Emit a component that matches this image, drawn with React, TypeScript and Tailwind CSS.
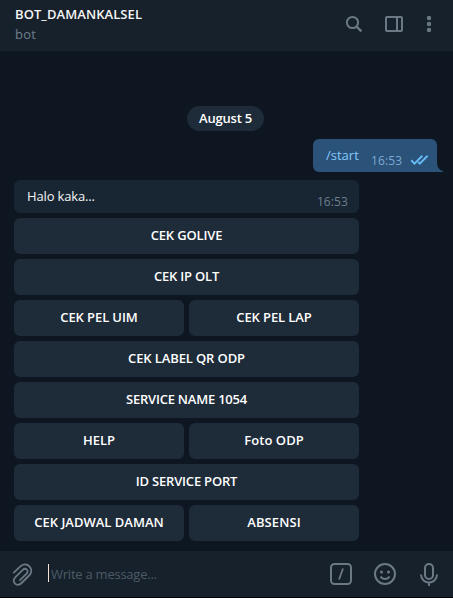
import React from "react";

type Key = { label: string; tracking?: string };

const keyboard: Key[][] = [
  [{ label: "CEK GOLIVE", tracking: "tracking-[-0.15px]" }],
  [{ label: "CEK IP OLT", tracking: "tracking-[-0.2px]" }],
  [
    { label: "CEK PEL UIM", tracking: "tracking-[-0.1px]" },
    { label: "CEK PEL LAP", tracking: "tracking-[-0.1px]" },
  ],
  [{ label: "CEK LABEL QR ODP", tracking: "tracking-[-0.12px]" }],
  [{ label: "SERVICE NAME 1054", tracking: "tracking-[-0.22px]" }],
  [{ label: "HELP" }, { label: "Foto ODP", tracking: "tracking-[0.08px]" }],
  [{ label: "ID SERVICE PORT", tracking: "tracking-[-0.2px]" }],
  [{ label: "CEK JADWAL DAMAN" }, { label: "ABSENSI", tracking: "tracking-[0.1px]" }],
];

function Header() {
  return (
    <header className="flex h-[51px] shrink-0 justify-between bg-[#17212b] pl-[15px]">
      <div className="pt-1">
        <h1 className="h-5 text-[13px] leading-5 font-semibold tracking-[0.07px] text-[#f5f5f5]">BOT_DAMANKALSEL</h1>
        <p className="h-5 text-[13px] leading-5 tracking-[0.2px] text-[#6d7f8f]">bot</p>
      </div>
      <svg className="h-[51px] w-[123px]" viewBox="330 0 123 51" fill="none" stroke="#6c7883" strokeWidth="2">
        <circle cx="352.5" cy="22.5" r="5.6" />
        <path d="M356.6 26.6L361.4 31.4" strokeWidth="2.4" />
        <rect x="386" y="17" width="16" height="14" rx="1" />
        <path d="M397 17V31" />
        <g fill="#6c7883" stroke="none">
          <circle cx="429" cy="18" r="2.2" />
          <circle cx="429" cy="24" r="2.2" />
          <circle cx="429" cy="30" r="2.2" />
        </g>
      </svg>
    </header>
  );
}

function Composer() {
  return (
    <footer className="flex h-[47px] shrink-0 border-b border-black bg-[#17212b]">
      <svg className="h-[46px] w-12" viewBox="0 551 48 46" fill="none" stroke="#6c7883" strokeWidth="1.8" strokeLinecap="round">
        <path d="M13.8 572.7L19.8 566.8C23.5 563.2 27.3 564.3 29.4 566.4C31.8 568.8 32.2 572.4 29.1 575.5L21.6 583C19.2 585.4 16.6 585.2 15 583.6C13.2 581.8 13.2 579.4 15.4 577.2L22.8 569.8C24.2 568.4 25.8 568.6 26.8 569.6C27.8 570.6 28 572.2 26.6 573.6L20 580.2" />
      </svg>
      <div className="mt-[13px] h-[18px] w-px bg-[#f5e4d5]" />
      <p className="mt-[13px] ml-[2px] flex-1 text-[13px] leading-5 tracking-[-0.24px] text-[#4c5a67]">Write a message...</p>
      <svg className="h-[46px] w-[143px]" viewBox="310 551 143 46" fill="none" stroke="#6c7883" strokeWidth="2">
        <rect x="331" y="564" width="20" height="20" rx="3.5" />
        <path d="M343 568.5L339 579.5" strokeWidth="1.8" />
        <circle cx="385" cy="574" r="10" />
        <circle cx="381.5" cy="572" r="1.5" fill="#6c7883" stroke="none" />
        <circle cx="388.5" cy="572" r="1.5" fill="#6c7883" stroke="none" />
        <path d="M380.5 576.5C382.5 579.8 387.5 579.8 389.5 576.5" strokeWidth="1.9" />
        <rect x="425" y="564" width="8" height="15" rx="4" />
        <path d="M421 574.5C421 585 437 585 437 574.5M429 582V586" />
      </svg>
    </footer>
  );
}

export default function App() {
  return (
    <div className="flex h-[598px] w-[453px] flex-col overflow-hidden bg-[#0e1621] font-['Open_Sans',sans-serif] text-[13px]">
      <Header />
      <main className="flex h-[500px] shrink-0 flex-col pt-[55px]">
        <div className="ml-[187px] flex h-[25px] w-[77px] items-center justify-center rounded-full bg-[#1e2c3a] font-semibold tracking-[-0.2px] text-white">
          August 5
        </div>
        <div className="relative mt-2 ml-[313px] flex h-[33px] w-[124px] rounded-[6px] rounded-br-none bg-[#2b5278] pl-[13px]">
          <span className="w-[45px] pt-[6px] leading-5 text-[#83caff]">/start</span>
          <span className="w-[39px] pt-[12px] text-[12px] leading-[19px] tracking-[0.1px] text-[#7da8d3]">16:53</span>
          <svg className="mt-[15px] h-3 w-[20px]" viewBox="0 0 20 12" fill="none" stroke="#65b9f4" strokeWidth="2">
            <path d="M1.2 6.3L4.5 9.6L12.3 1.8M8.2 8L9.8 9.6L17.6 1.8" />
          </svg>
          <svg className="absolute bottom-0 left-[124px] h-[10px] w-[6px]" viewBox="0 0 6 10">
            <path d="M0 0C0 5 2 8 6 9V10H0Z" fill="#2b5278" />
          </svg>
        </div>
        <div className="mt-2 ml-[14px] flex h-[33px] w-[345px] justify-between rounded-[6px] bg-[#182533] pr-[11px] pl-[13px]">
          <span className="pt-[6px] leading-5 tracking-[-0.15px] text-[#f5f5f5]">Halo kaka...</span>
          <span className="pt-[12px] text-[12px] leading-[19px] tracking-[0.1px] text-[#6d7f8f]">16:53</span>
        </div>
        <div className="mt-[5px] ml-[14px] flex w-[345px] flex-col gap-[5px]">
          {keyboard.map((row) => (
            <div key={row[0].label} className="flex gap-[5px]">
              {row.map(({ label, tracking }) => (
                <button
                  key={label}
                  className={`h-9 flex-1 basis-0 rounded-[6px] bg-[#1e2b38] font-semibold whitespace-nowrap text-white ${tracking ?? ""}`}
                >
                  {label}
                </button>
              ))}
            </div>
          ))}
        </div>
      </main>
      <Composer />
    </div>
  );
}
